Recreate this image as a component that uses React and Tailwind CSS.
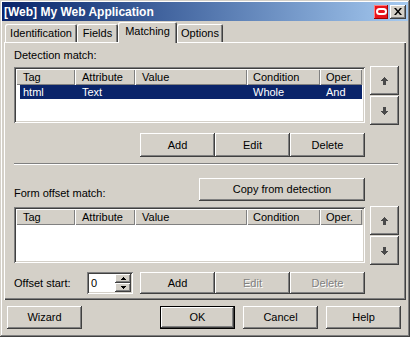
import React from "react";

const raised =
  "shadow-[inset_-1px_-1px_#404040,inset_1px_1px_#ffffff,inset_-2px_-2px_#808080,inset_2px_2px_#d4d0c8]";
const sunken =
  "shadow-[inset_1px_1px_#808080,inset_-1px_-1px_#ffffff,inset_2px_2px_#404040,inset_-2px_-2px_#d4d0c8]";
const headerCell =
  "shadow-[inset_1px_1px_#ffffff,inset_-1px_-1px_#808080] h-full flex items-center pl-[6px] shrink-0";

function Btn({ children, w = "w-[75px]", h = "h-[24px]", disabled = false, def = false }) {
  return (
    <div
      className={`${w} ${h} shrink-0 bg-[#d4d0c8] flex items-center justify-center ${
        def
          ? "shadow-[inset_0_0_0_1px_#000000,inset_-2px_-2px_#404040,inset_2px_2px_#ffffff,inset_-3px_-3px_#808080]"
          : raised
      } ${disabled ? "text-[#808080] [text-shadow:1px_1px_0_#ffffff]" : "text-black"}`}
    >
      {children}
    </div>
  );
}

function Arrow({ down = false }) {
  return (
    <svg width="7" height="8" viewBox="0 0 7 8" className={down ? "rotate-180" : ""}>
      <path d="M3 0h1v1h1v1h1v1h1v1H5v4H2V4H0V3h1V2h1V1h1z" fill="#4a4a4a" />
    </svg>
  );
}

function ArrowCol() {
  return (
    <div className="flex flex-col gap-[1px] w-[29px] shrink-0">
      <div className={`h-[29px] ${raised} flex items-center justify-center`}>
        <Arrow />
      </div>
      <div className={`h-[29px] ${raised} flex items-center justify-center`}>
        <Arrow down />
      </div>
    </div>
  );
}

function ListView({ rows }) {
  return (
    <div className={`w-[351px] h-[56px] mt-[1px] bg-white p-[2px] ${sunken} flex flex-col`}>
      <div className="h-[16px] flex bg-[#d4d0c8]">
        <div className={`${headerCell} w-[59px] pl-[7px]`}>Tag</div>
        <div className={`${headerCell} w-[60px] pl-[7px]`}>Attribute</div>
        <div className={`${headerCell} w-[112px] pl-[7px]`}>Value</div>
        <div className={`${headerCell} w-[73px]`}>Condition</div>
        <div className={`${headerCell} w-[42px]`}>Oper.</div>
      </div>
      {rows.map((r, i) => (
        <div key={i} className="h-[14px] flex">
          <div className="ml-[4px] w-[342px] flex bg-[#0a246a] text-white items-center">
            <div className="w-[55px] pl-[3px]">{r[0]}</div>
            <div className="w-[60px] pl-[7px]">{r[1]}</div>
            <div className="w-[112px] pl-[7px]">{r[2]}</div>
            <div className="w-[73px] pl-[6px]">{r[3]}</div>
            <div className="w-[42px] pl-[6px]">{r[4]}</div>
          </div>
        </div>
      ))}
    </div>
  );
}

function Tab({ children, w, selected }) {
  return (
    <div
      className={`${w} shrink-0 bg-[#d4d0c8] rounded-t-[2px] flex justify-center shadow-[inset_1px_1px_#ffffff,inset_-1px_0_#404040,inset_-2px_0_#808080] ${
        selected ? "h-[21px] -mb-px relative z-10 pt-[3px]" : "h-[18px] pt-[3px]"
      }`}
    >
      {children}
    </div>
  );
}

export default function App() {
  return (
    <div className="w-[410px] h-[337px] bg-[#d4d0c8] font-['Liberation_Sans',Arial,sans-serif] text-[11px] leading-[13px] text-black px-[2px] pt-[2px] flex flex-col shadow-[inset_-1px_-1px_#404040,inset_1px_1px_#d4d0c8,inset_-2px_-2px_#808080,inset_2px_2px_#ffffff] overflow-hidden">
      {/* Title bar */}
      <div className="h-[19px] shrink-0 bg-gradient-to-r from-[#0a246a] to-[#a6caf0] flex items-center pl-[2px] pr-[2px]">
        <div className="text-white font-bold text-[12px] leading-[14px] flex-1">[Web] My Web Application</div>
        <div className="w-[14px] h-[14px] bg-[#e8141c] flex items-center justify-center shadow-[inset_-1px_-1px_#a00000,inset_1px_1px_#ff8080]">
          <div className="w-[11px] h-[7px] rounded-full border-2 border-white" />
        </div>
        <div className={`ml-[2px] w-[16px] h-[14px] bg-[#d4d0c8] flex items-center justify-center ${raised}`}>
          <svg width="8" height="7" viewBox="0 0 8 7">
            <path d="M0 0h2l2 2.5L6 0h2L5 3.5 8 7H6L4 4.5 2 7H0l3-3.5z" fill="#000" />
          </svg>
        </div>
      </div>

      {/* Tabs */}
      <div className="h-[21px] shrink-0 flex items-end pl-[3px]">
        <Tab w="w-[72px]">Identification</Tab>
        <Tab w="w-[41px]">Fields</Tab>
        <Tab w="w-[59px]" selected>
          Matching
        </Tab>
        <Tab w="w-[46px]">Options</Tab>
      </div>

      {/* Panel */}
      <div className="h-[258px] shrink-0 mx-[2px] shadow-[inset_1px_1px_#ffffff,inset_-1px_-1px_#404040,inset_-2px_-2px_#808080] pl-[10px] pt-[7px] flex flex-col">
        <div className="h-[13px]">Detection match:</div>
        <div className="mt-[4px] flex items-start gap-[5px]">
          <ListView rows={[["html", "Text", "", "Whole", "And"]]} />
          <ArrowCol />
        </div>
        <div className="mt-[8px] w-[351px] flex justify-end">
          <Btn>Add</Btn>
          <Btn>Edit</Btn>
          <Btn>Delete</Btn>
        </div>
        <div className="mt-[6px] w-[384px] h-[2px] border-t border-t-[#808080] border-b border-b-white" />
        <div className="mt-[13px] w-[351px] flex items-end justify-between">
          <div className="mb-[1px]">Form offset match:</div>
          <Btn w="w-[166px]" h="h-[23px]">
            Copy from detection
          </Btn>
        </div>
        <div className="mt-[5px] flex items-start gap-[5px]">
          <ListView rows={[]} />
          <ArrowCol />
        </div>
        <div className="mt-[7px] w-[351px] flex items-center">
          <div className="w-[73px]">Offset start:</div>
          <div className={`w-[46px] h-[22px] bg-white ${sunken} p-[2px] flex items-center`}>
            <div className="flex-1 pl-[2px]">0</div>
            <div className="w-[16px] h-full flex flex-col">
              <div className={`flex-1 bg-[#d4d0c8] ${raised} flex items-center justify-center`}>
                <svg width="5" height="3" viewBox="0 0 5 3">
                  <path d="M2 0h1v1h1v1h1v1H0V2h1V1h1z" fill="#000" />
                </svg>
              </div>
              <div className={`flex-1 bg-[#d4d0c8] ${raised} flex items-center justify-center`}>
                <svg width="5" height="3" viewBox="0 0 5 3">
                  <path d="M0 0h5v1H4v1H3v1H2V2H1V1H0z" fill="#000" />
                </svg>
              </div>
            </div>
          </div>
          <div className="ml-[7px] flex">
            <Btn h="h-[22px]">Add</Btn>
            <Btn h="h-[22px]" disabled>
              Edit
            </Btn>
            <Btn h="h-[22px]" disabled>
              Delete
            </Btn>
          </div>
        </div>
      </div>

      {/* Bottom buttons */}
      <div className="mt-[6px] flex items-center pl-[5px]">
        <Btn h="h-[23px]">Wizard</Btn>
        <div className="ml-[78px] flex gap-[8px]">
          <Btn h="h-[23px]" def>
            OK
          </Btn>
          <Btn h="h-[23px]">Cancel</Btn>
          <Btn h="h-[23px]">Help</Btn>
        </div>
      </div>
    </div>
  );
}
